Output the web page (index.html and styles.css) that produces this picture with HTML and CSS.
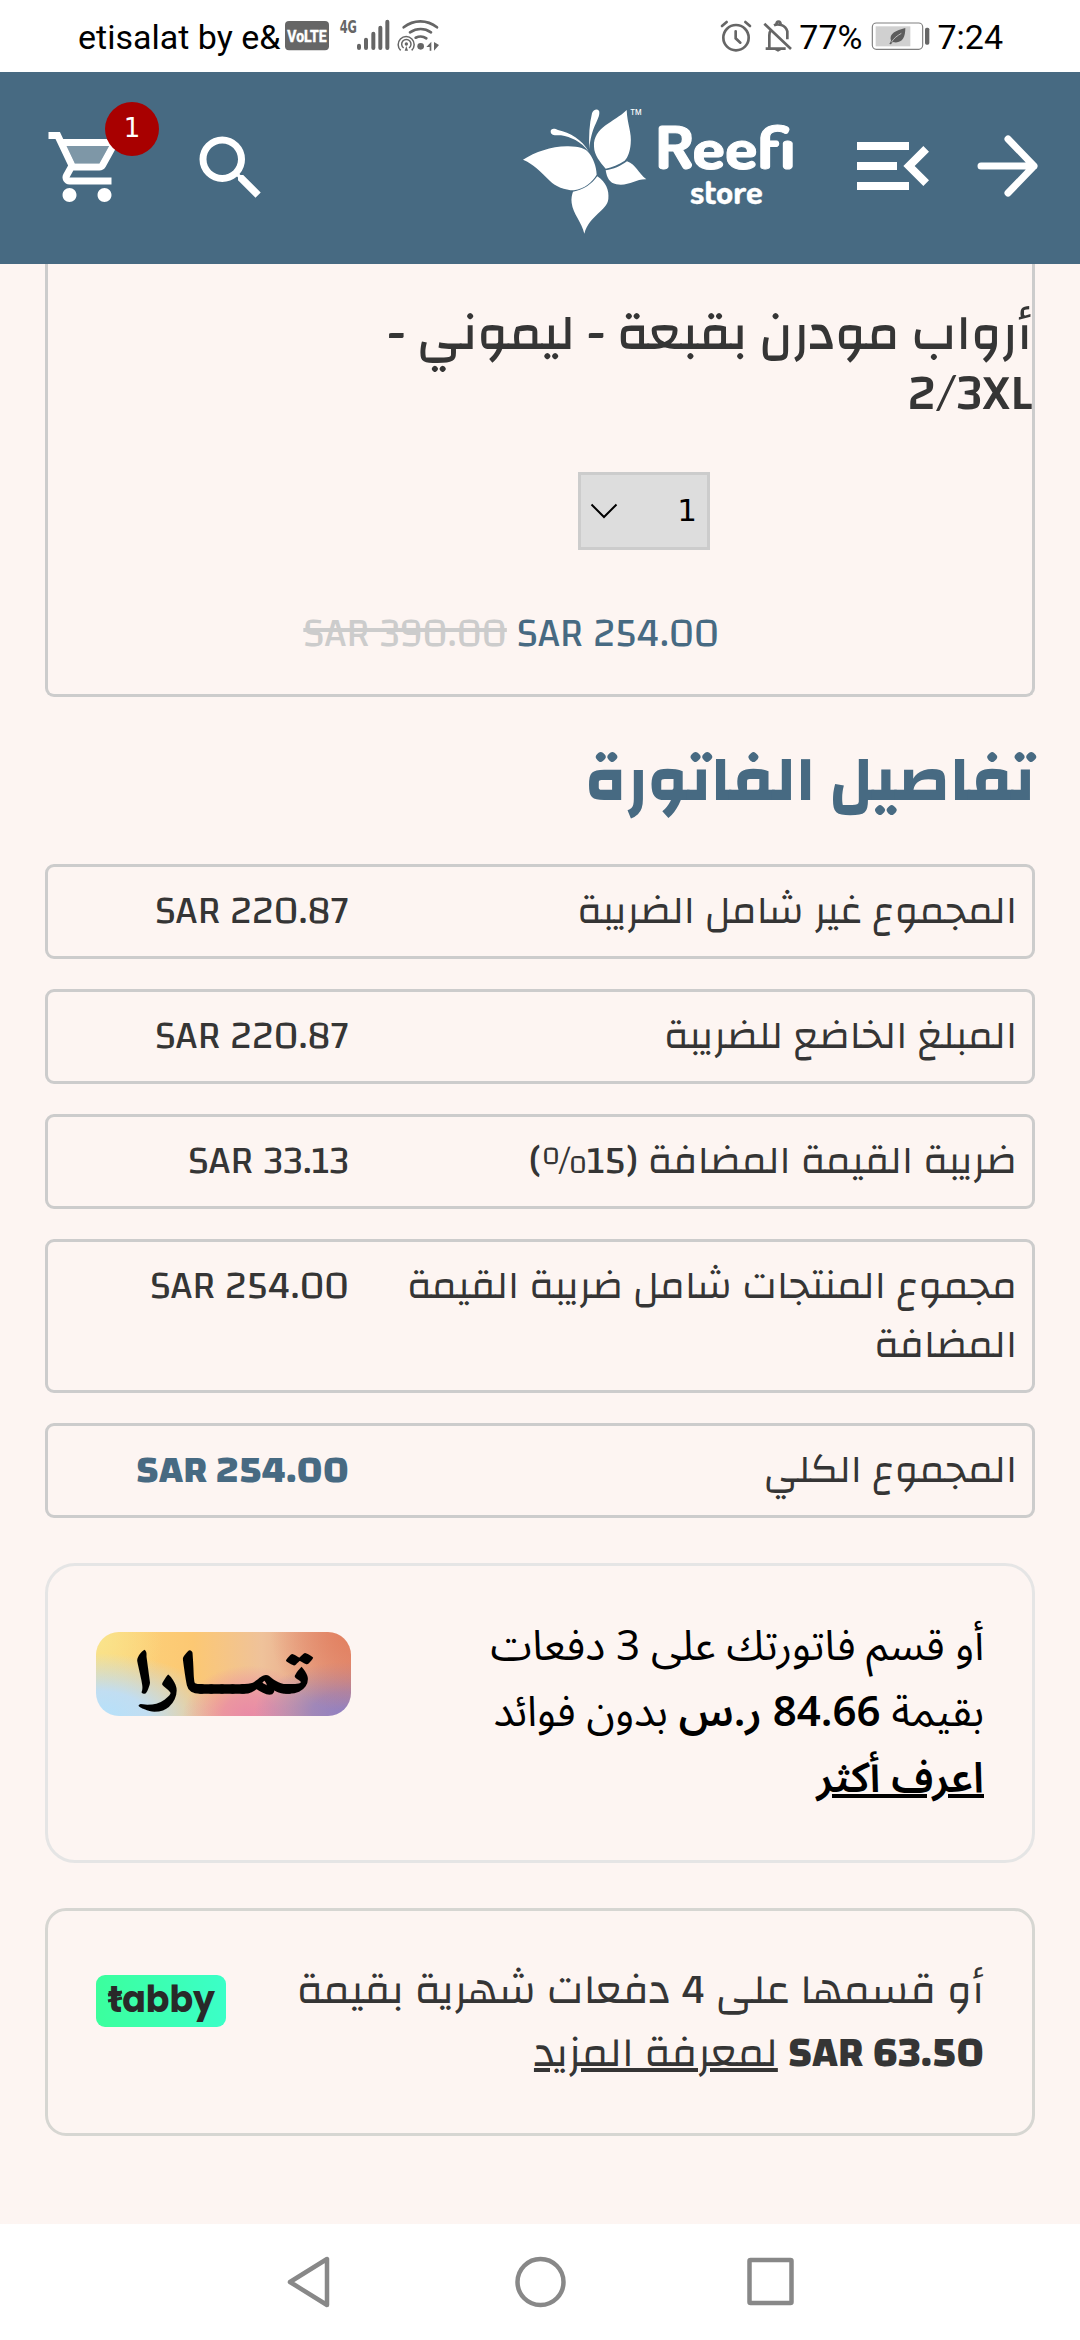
FILE: index.html
```html
<!DOCTYPE html>
<html lang="ar">
<head>
<meta charset="utf-8">
<title>Reefi store</title>
<link rel="stylesheet" href="styles.css">
</head>
<body>
<div class="statusbar">
  <div class="status-group">
    <span>etisalat by e&amp;</span>
    <svg class="net-icons" width="170" height="50" viewBox="0 0 510 150">
      <rect x="15" y="33" width="132" height="88" rx="12" fill="#666"/>
      <text x="22" y="97" textLength="118" lengthAdjust="spacingAndGlyphs" class="volte">VoLTE</text>
      <text x="179" y="69" textLength="52" lengthAdjust="spacingAndGlyphs" class="fourg">4G</text>
      <g stroke="#666" stroke-width="12" stroke-linecap="round">
        <path d="M237 107v7M258 89v25M280 71v43M301 53v61M322 35v79"/>
      </g>
      <g fill="none" stroke="#666" stroke-width="8" stroke-linecap="round">
        <path d="M371 52c30-24 70-24 100 0M390 67c20-13 44-13 63 0M407 83c11-5 22-5 32 2"/>
      </g>
      <g fill="none" stroke="#666" stroke-width="4.500">
        <path d="M362 121a24 24 0 1 1 33 0M371 114a14 14 0 1 1 16 0"/>
      </g>
      <circle cx="379" cy="102" r="5" fill="#666"/>
      <path d="M374 122l5-14 5 14z" fill="#666"/>
      <circle cx="422" cy="109" r="10" fill="#666"/>
      <path d="M439 111l15-16v27h-5v-11zM462 96l15 9-15 17z" fill="#666"/>
    </svg>
  </div>
  <div class="status-group">
    <svg width="80" height="50" viewBox="0 0 240 150" fill="none" stroke="#666" stroke-width="8" stroke-linecap="round">
      <circle cx="63" cy="83" r="38"/>
      <path d="M62 64v21l14 13M21 48l14-12M91 36l14 12"/>
      <path stroke-linecap="butt" d="M148 41l80 76M152 116h60M163 113V76c0-8 3-14 6-18M177 46c12-6 34-2 40 18v24M184 45c0-14 13-14 13 0"/>
      <path d="M178 119h22l-11 6z" fill="#666" stroke="none"/>
    </svg>
    <span class="battery-pct">77%</span>
    <svg class="battery" width="60" height="50" viewBox="0 0 180 150">
      <rect x="7" y="39" width="151" height="79" rx="12" fill="#fff" stroke="#808080" stroke-width="3.500"/>
      <rect x="17" y="49" width="104" height="60" fill="#d0d0d0"/>
      <path d="M106 54c-28 7-50 17-43 38l-5 10 5 1 5-7c27 6 38-12 38-42z" fill="#5c5c5c"/>
      <path d="M64 97c8-13 18-20 30-27" stroke="#d0d0d0" stroke-width="2.500" fill="none"/>
      <rect x="165" y="53" width="13" height="51" rx="5" fill="#666"/>
    </svg>
    <span>7:24</span>
  </div>
</div>

<header class="topbar">
  <div class="cart">
    <svg width="84" height="84" viewBox="0 0 24 24" fill="#fff">
      <path opacity=".3" d="M6.160 6l2.370 5h7.020l2.760-5z"/>
      <path d="M15.550 13c.75 0 1.410-.41 1.750-1.030l3.580-6.490A.996.996 0 0 0 20.010 4H5.210l-.94-2H1v2h2l3.600 7.590-1.350 2.440C4.520 15.370 5.480 17 7 17h12v-2H7l1.100-2h7.450zM6.160 6h12.150l-2.760 5H8.530L6.160 6zM7 18c-1.100 0-1.990.9-1.990 2S5.900 22 7 22s2-.9 2-2-.9-2-2-2zm10 0c-1.100 0-1.990.9-1.990 2s.89 2 1.990 2 2-.9 2-2-.9-2-2-2z"/>
    </svg>
    <span class="badge">1</span>
  </div>
  <svg class="search" width="84" height="84" viewBox="0 0 24 24" fill="#fff">
    <path d="M15.500 14h-.79l-.28-.27A6.470 6.470 0 0 0 16 9.500 6.500 6.500 0 1 0 9.500 16c1.610 0 3.090-.59 4.230-1.570l.27.28v.79l5 4.990L20.490 19l-4.990-5zm-6 0C7.010 14 5 11.990 5 9.500S7.010 5 9.500 5 14 7.010 14 9.500 11.990 14 9.500 14z"/>
  </svg>
  <svg class="logo" width="290" height="140" viewBox="0 0 870 420" fill="#fff">
    <path d="M24 179C62 156 110 138 160 139c34 1 52 7 62 20 12 16 22 38 23 65-13 22-36 42-68 47-28 0-56-12-72-28-30-30-48-50-81-64z"/>
    <path d="M247 229c26 18 36 42 33 68-4 36-56 48-72 104-8-34-34-60-38-92-2-14 1-26 4-34 32-6 56-22 73-46z"/>
    <path d="M335 30c2 44 16 68 12 102-2 22-8 40-18 50-18 12-38 20-57 24-18-22-34-40-35-66-2-60 60-72 98-110z"/>
    <path d="M336 184c28 10 32 34 58 54-30-2-54 22-90 15-20-4-28-18-32-42 24-4 44-12 64-27z"/>
    <path d="M107 94c0-10 12-10 22-4 36 8 72 28 93 66-26-34-54-44-84-50-16 0-31 2-31-12zM223 148c-2-40 0-76 8-108 4-14 24-16 22 0-2 24-24 40-30 108z"/>
    <text x="346" y="44" textLength="34" lengthAdjust="spacingAndGlyphs" class="tm">TM</text>
    <text x="421" y="208" textLength="420" lengthAdjust="spacingAndGlyphs" class="brand">Reefi</text>
    <text x="525" y="312" textLength="218" lengthAdjust="spacingAndGlyphs" class="brand-sub">store</text>
  </svg>
  <svg class="menu" width="96" height="96" viewBox="0 0 24 24" fill="#fff">
    <path d="M3 18h13v-2H3v2zM3 13h10v-2H3v2zm0-7v2h13V6H3zm18 9.590L17.420 12 21 8.410 19.590 7l-5 5 5 5L21 15.590z"/>
  </svg>
  <svg class="arrow" width="66" height="70" viewBox="0 0 66 70" fill="none" stroke="#fff" stroke-width="7" stroke-linecap="round" stroke-linejoin="round">
    <path d="M6 35h53M33 8l26 27-26 27"/>
  </svg>
</header>

<main class="page" dir="rtl">
  <section class="product">
    <h3 class="product-title">أرواب مودرن بقبعة - ليموني - 2/3XL</h3>
    <div class="qty">
      <span>1</span>
      <svg width="28" height="16" viewBox="0 0 28 16" fill="none" stroke="#000" stroke-width="2"><path d="M1.500 1.500L14 14 26.500 1.500"/></svg>
    </div>
    <div class="prices"><span class="now" dir="ltr">SAR 254.00</span><s class="was" dir="ltr">SAR 390.00</s></div>
  </section>

  <h2 class="invoice-title">تفاصيل الفاتورة</h2>

  <div class="rows">
    <div class="row"><span class="label">المجموع غير شامل الضريبة</span><span class="amount" dir="ltr">SAR 220.87</span></div>
    <div class="row"><span class="label">المبلغ الخاضع للضريبة</span><span class="amount" dir="ltr">SAR 220.87</span></div>
    <div class="row"><span class="label">ضريبة القيمة المضافة (15%)</span><span class="amount" dir="ltr">SAR 33.13</span></div>
    <div class="row"><span class="label">مجموع المنتجات شامل ضريبة القيمة المضافة</span><span class="amount" dir="ltr">SAR 254.00</span></div>
    <div class="row"><span class="label">المجموع الكلي</span><span class="amount total" dir="ltr">SAR 254.00</span></div>
  </div>

  <section class="tamara">
    <p class="tamara-text">أو قسم فاتورتك على 3 دفعات بقيمة <b>84.66 ر.س</b> بدون فوائد <a class="more">اعرف أكثر</a></p>
    <svg class="tamara-logo" width="255" height="84" viewBox="0 0 765 252">
      <text x="646" y="182" textLength="532" lengthAdjust="spacingAndGlyphs" class="tamara-word" direction="rtl">تمــــارا</text>
    </svg>
  </section>

  <section class="tabby">
    <p class="tabby-text">أو قسمها على 4 دفعات شهرية بقيمة <b dir="ltr">SAR 63.50</b> <a>لمعرفة المزيد</a></p>
    <svg class="tabby-logo" width="130" height="52" viewBox="0 0 130 52">
      <text x="12" y="36.500" textLength="107" lengthAdjust="spacingAndGlyphs" direction="ltr" class="tabby-word">tabby</text>
      <path d="M12 26l14-3M12 20l14-3" stroke="#292929" stroke-width="3"/>
    </svg>
  </section>
</main>

<nav class="navbar">
  <svg width="49" height="54" viewBox="0 0 49 54"><path d="M42 4v46L5 27z"/></svg>
  <svg width="54" height="54" viewBox="0 0 54 54"><circle cx="27.500" cy="27" r="23"/></svg>
  <svg width="50" height="54" viewBox="0 0 50 54"><rect x="3.500" y="5" width="42" height="43" rx="1"/></svg>
</nav>
</body>
</html>
```
FILE: styles.css
```css
* { box-sizing: border-box; }
body {
  margin: 0;
  width: 1080px;
  height: 2340px;
  overflow: hidden;
  display: flex;
  flex-direction: column;
  background: #fdf5f2;
  color: #353535;
  font-family: Changa, "Noto Sans Arabic", "Noto Sans", sans-serif;
}
svg { display: block; flex: none; }
h2, h3, p { margin: 0; }

.statusbar {
  height: 72px;
  flex: none;
  display: flex;
  justify-content: space-between;
  padding: 0 77px 0 78px;
  background: #fff;
  color: #000;
  font: 34px/40px Roboto, sans-serif;
}
.status-group { display: flex; padding-top: 10px; height: 60px; }
.status-group span { padding-top: 7px; line-height: 40px; white-space: nowrap; }
.battery-pct { margin-left: 4px; }
.battery { margin: 0 7px 0 8px; }
.volte { font: 700 50px Roboto, sans-serif; fill: #fff; stroke: #fff; stroke-width: 1.5px; }
.fourg { font: 700 52px "DejaVu Sans Condensed", Roboto, sans-serif; fill: #666; }

.topbar {
  height: 192px;
  flex: none;
  display: flex;
  align-items: center;
  padding: 0 40px 4px 45px;
  background: #476a82;
}
.cart { position: relative; margin-top: 2px; }
.badge {
  position: absolute;
  left: 60px;
  top: -23px;
  width: 54px;
  height: 54px;
  border-radius: 50%;
  background: #a80000;
  color: #fff;
  font: 26px/52px "DejaVu Sans", sans-serif;
  text-align: center;
}
.search { margin: 4px 0 0 60px; }
.logo { margin: 8px 0 0 242px; }
.menu { margin-left: 40px; }
.arrow { margin-left: 34px; }
.tm { font: 500 24px Inter, sans-serif; }
.brand { font: 700 172px Dosis, Nunito, sans-serif; stroke: #fff; stroke-width: 3px; }
.brand-sub { font: 700 100px Dosis, Nunito, sans-serif; stroke: #fff; stroke-width: 1px; }

.page {
  flex: 1;
  display: flex;
  flex-direction: column;
  padding: 0 45px;
}
.product {
  height: 433px;
  flex: none;
  border: 3px solid #ccc;
  border-top: 0;
  border-radius: 0 0 9px 9px;
  padding-top: 40px;
}
.product-title { width: 660px; font-size: 50.4px; font-weight: 500; line-height: 60px; }
.qty {
  display: flex;
  align-items: center;
  justify-content: space-between;
  width: 132px;
  height: 78px;
  margin: 48px 322px 0 0;
  padding: 0 10px 0 9px;
  border: 3px solid #ccc;
  background: #ddd;
  color: #000;
  font: 31px/1 "DejaVu Sans", sans-serif;
}
.qty span { margin-top: -2px; }
.prices { display: flex; gap: 10px; margin: 54px 313px 0 0; font-size: 40.2px; line-height: 60px; color: #476a82; }
.prices .was { color: #ccc; }

.invoice-title { margin-top: 28px; font-size: 64.8px; font-weight: 700; line-height: 110px; color: #476a82; }

.rows { display: flex; flex-direction: column; gap: 30px; margin-top: 29px; }
.row {
  display: flex;
  justify-content: space-between;
  padding: 14px 15px 16px;
  border: 3px solid #ccc;
  border-radius: 9px;
  font-size: 39.6px;
  line-height: 59px;
}
.label { width: 620px; }
.amount { width: 286px; text-align: right; }
.total { font-weight: 700; color: #476a82; }

.tamara, .tabby {
  display: flex;
  justify-content: space-between;
  border: 3px solid #e5e5e5;
}
.tamara { height: 300px; margin-top: 45px; padding: 48px 48px 0; border-radius: 30px; }
.tamara-text {
  width: 520px;
  font: 42px/66px "Noto Sans Arabic", "Noto Sans", sans-serif;
  color: #000;
}
.tamara-text b, .more { font-weight: 600; }
.more { display: block; text-decoration: underline; text-decoration-thickness: 4px; }
.tamara-logo {
  margin-top: 18px;
  border-radius: 23px;
  background:
    radial-gradient(circle at 100% 0%, #e2805f 0, rgba(226,128,95,0) 30%),
    radial-gradient(ellipse 38% 60% at 100% 95%, #8f80c4 0, rgba(143,128,196,.8) 40%, rgba(143,128,196,0) 100%),
    radial-gradient(ellipse 26% 60% at 60% 100%, #e98aa6 0, rgba(233,138,166,.8) 40%, rgba(233,138,166,0) 100%),
    radial-gradient(ellipse 50% 75% at 0% 100%, #b4e1fb 0, rgba(190,222,248,.95) 40%, rgba(205,215,240,0) 100%),
    radial-gradient(circle at 0% 10%, #f9e48c 0, rgba(249,228,140,0) 25%),
    linear-gradient(90deg, #fdd67c 0, #fcc873 38%, #efc29a 65%, #e2907a 100%);
}
.tamara-word { font: 700 182px "Scheherazade New", "Noto Naskh Arabic", serif; fill: #000; stroke: #000; stroke-width: 5px; }

.tabby { height: 228px; margin-top: 45px; padding: 48px 48px 0; border-color: #d6d6d2; border-radius: 21px; }
.tabby-text { width: 700px; font-size: 42px; line-height: 63px; }
.tabby-text a { text-decoration: underline; text-decoration-thickness: 4px; }
.tabby-logo { margin-top: 16px; border-radius: 9px; background: linear-gradient(90deg, #3bff9d, #3bffc8); }
.tabby-word { font: 700 37px Poppins, Inter, sans-serif; fill: #292929; }

.navbar {
  height: 116px;
  flex: none;
  display: flex;
  justify-content: center;
  align-items: center;
  gap: 179px;
  background: #fff;
}
.navbar svg { fill: none; stroke: #888; stroke-width: 4.5px; stroke-linejoin: round; }
```
